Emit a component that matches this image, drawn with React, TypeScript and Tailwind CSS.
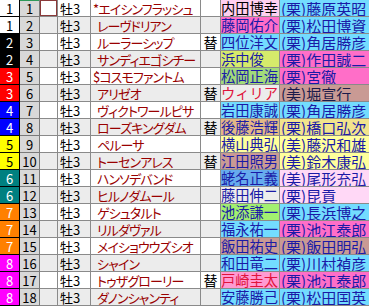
import React from "react";

type Row = {
  w: number;
  n: number;
  name: string;
  mark?: boolean;
  sub?: boolean;
  jockey: string;
  jbg?: string;
  jc: string;
  trainer: string;
  tbg: string;
  tc: string;
};

const WAKU: Record<number, { bg: string; fg: string }> = {
  1: { bg: "bg-white", fg: "text-black" },
  2: { bg: "bg-black", fg: "text-white" },
  3: { bg: "bg-[#ff0000]", fg: "text-white" },
  4: { bg: "bg-[#0000ff]", fg: "text-white" },
  5: { bg: "bg-[#ffff00]", fg: "text-black" },
  6: { bg: "bg-[#008080]", fg: "text-white" },
  7: { bg: "bg-[#ff8000]", fg: "text-white" },
  8: { bg: "bg-[#ff00ff]", fg: "text-white" },
};

const BLUE = "text-[#1a1aa6]";
const CYAN = "bg-[#73dcff]";
const PINK = "bg-[#ff6ec8]";

const rows: Row[] = [
  { w: 1, n: 1, name: "*エイシンフラッシュ", mark: true, jockey: "内田博幸", jbg: "bg-[#ffd0f0]", jc: "text-black", trainer: "(栗)藤原英昭", tbg: CYAN, tc: BLUE },
  { w: 1, n: 2, name: "レーヴドリアン", jockey: "藤岡佑介", jbg: PINK, jc: BLUE, trainer: "(栗)松田博資", tbg: CYAN, tc: BLUE },
  { w: 2, n: 3, name: "ルーラーシップ", sub: true, jockey: "四位洋文", jbg: CYAN, jc: BLUE, trainer: "(栗)角居勝彦", tbg: CYAN, tc: BLUE },
  { w: 2, n: 4, name: "サンディエゴシチー", jockey: "浜中俊", jbg: "bg-[#d6ea6b]", jc: BLUE, trainer: "(栗)作田誠二", tbg: PINK, tc: BLUE },
  { w: 3, n: 5, name: "$コスモファントム", mark: true, jockey: "松岡正海", jbg: "bg-[#a2da7a]", jc: BLUE, trainer: "(栗)宮徹", tbg: PINK, tc: BLUE },
  { w: 3, n: 6, name: "アリゼオ", sub: true, jockey: "ウィリア", jc: "text-[#e0143c]", trainer: "(美)堀宣行", tbg: "bg-[#c99a94]", tc: "text-[#1a1a4a]" },
  { w: 4, n: 7, name: "ヴィクトワールピサ", jockey: "岩田康誠", jbg: CYAN, jc: BLUE, trainer: "(栗)角居勝彦", tbg: CYAN, tc: BLUE },
  { w: 4, n: 8, name: "ローズキングダム", sub: true, jockey: "後藤浩輝", jbg: "bg-[#e2b886]", jc: BLUE, trainer: "(栗)橋口弘次", tbg: "bg-[#f2e48c]", tc: BLUE },
  { w: 5, n: 9, name: "ペルーサ", jockey: "横山典弘", jbg: "bg-[#ffff9c]", jc: BLUE, trainer: "(美)藤沢和雄", tbg: "bg-[#ffff9c]", tc: BLUE },
  { w: 5, n: 10, name: "トーセンアレス", sub: true, jockey: "江田照男", jbg: "bg-[#c99a94]", jc: BLUE, trainer: "(美)鈴木康弘", tbg: "bg-[#ffff9c]", tc: BLUE },
  { w: 6, n: 11, name: "ハンソデバンド", jockey: "蛯名正義", jbg: "bg-[#66acee]", jc: BLUE, trainer: "(美)尾形充弘", tbg: "bg-[#ffd8f6]", tc: BLUE },
  { w: 6, n: 12, name: "ヒルノダムール", jockey: "藤田伸二", jc: BLUE, trainer: "(栗)昆貢", tbg: "bg-[#ffd8f6]", tc: BLUE },
  { w: 7, n: 13, name: "ゲシュタルト", jockey: "池添謙一", jbg: "bg-[#a2f070]", jc: BLUE, trainer: "(栗)長浜博之", tbg: CYAN, tc: BLUE },
  { w: 7, n: 14, name: "リルダヴァル", jockey: "福永祐一", jbg: CYAN, jc: BLUE, trainer: "(栗)池江泰郎", tbg: PINK, tc: BLUE },
  { w: 7, n: 15, name: "メイショウウズシオ", jockey: "飯田祐史", jbg: "bg-[#c99a94]", jc: BLUE, trainer: "(栗)飯田明弘", tbg: "bg-[#c99a94]", tc: BLUE },
  { w: 8, n: 16, name: "シャイン", jockey: "和田竜二", jbg: CYAN, jc: BLUE, trainer: "(栗)川村禎彦", tbg: CYAN, tc: BLUE },
  { w: 8, n: 17, name: "トゥザグローリー", sub: true, jockey: "戸崎圭太", jbg: "bg-[#ff9ad2]", jc: "text-[#e0143c]", trainer: "(栗)池江泰郎", tbg: PINK, tc: BLUE },
  { w: 8, n: 18, name: "ダノンシャンティ", jockey: "安藤勝己", jbg: CYAN, jc: BLUE, trainer: "(栗)松田国英", tbg: CYAN, tc: BLUE },
];

export default function App() {
  return (
    <div
      className="w-[369px] h-[308px] overflow-hidden bg-white leading-none"
      style={{ fontFamily: '"Noto Sans CJK JP", "Noto Sans", sans-serif' }}
    >
      {rows.map((r, i) => {
        const even = i % 2 === 1;
        const rowBg = even ? "bg-[#ececec]" : "bg-white";
        const wk = WAKU[r.w];
        return (
          <div key={r.n} className="flex h-[17px] w-[420px]">
            <div
              className={`w-[20px] shrink-0 flex items-center justify-center border-r border-b border-black text-[13px] ${wk.bg} ${wk.fg}`}
            >
              {r.w}
            </div>
            <div
              className={`w-[20px] shrink-0 flex items-center justify-center border-r border-b border-[#7a7a7a] bg-[#d8d8d8] text-[13px] text-black ${
                i === 0 ? "shadow-[inset_0_1px_0_#2e9a5a]" : ""
              }`}
            >
              {r.n}
            </div>
            <div className={`w-[18px] shrink-0 border-r border-b border-[#8a8a8a] ${rowBg}`}>
              {i === 0 && <div className="h-full w-[17px] border border-[#8b3a3a] bg-white" />}
            </div>
            <div
              className={`w-[33px] shrink-0 flex items-center pl-[2px] border-r border-b border-[#8a8a8a] text-[13px] text-black ${rowBg}`}
            >
              牡3
            </div>
            <div
              className={`w-[110px] shrink-0 flex items-center overflow-hidden whitespace-pre border-r border-b border-[#8a8a8a] text-[13px] tracking-[-0.9px] text-[#990000] [font-feature-settings:'palt'] ${rowBg} ${
                r.mark ? "pl-[2px]" : "pl-[6px]"
              }`}
            >
              <span className="whitespace-nowrap">{r.name}</span>
            </div>
            <div
              className={`w-[20px] shrink-0 flex items-center justify-center border-r border-b border-[#8a8a8a] text-[14px] text-black ${rowBg}`}
            >
              {r.sub ? "替" : ""}
            </div>
            <div
              className={`w-[59px] shrink-0 flex items-center overflow-hidden border-r border-b border-[#8a8a8a] text-[14.25px] ${
                r.jbg ?? rowBg
              } ${r.jc}`}
            >
              <span className="whitespace-nowrap">{r.jockey}</span>
            </div>
            <div
              className={`w-[100px] shrink-0 flex items-center overflow-hidden pl-[1px] border-b border-[#8a8a8a] text-[15px] ${r.tbg} ${r.tc}`}
            >
              <span className="whitespace-nowrap">{r.trainer}</span>
            </div>
          </div>
        );
      })}
    </div>
  );
}
